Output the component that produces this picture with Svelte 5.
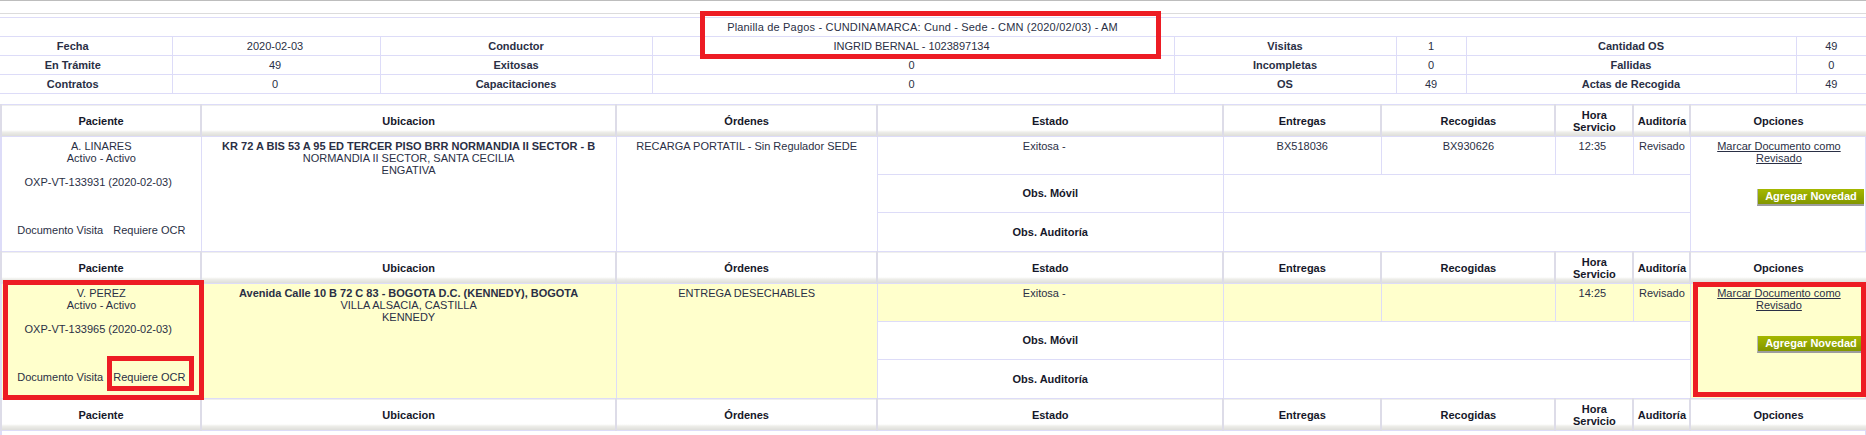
<script lang="ts">
  type Visit = {
    name: string;
    code: string;
    address: string;
    area: string;
    zone: string;
    order: string;
    delivery: string;
    pickup: string;
    time: string;
    highlight: boolean;
  };

  const summary = [
    ['Fecha', '2020-02-03', 'Conductor', 'INGRID BERNAL - 1023897134', 'Visitas', '1', 'Cantidad OS', '49'],
    ['En Trámite', '49', 'Exitosas', '0', 'Incompletas', '0', 'Fallidas', '0'],
    ['Contratos', '0', 'Capacitaciones', '0', 'OS', '49', 'Actas de Recogida', '49']
  ];

  const visits: Visit[] = [
    {
      name: 'A. LINARES',
      code: 'OXP-VT-133931 (2020-02-03)',
      address: 'KR 72 A BIS 53 A 95 ED TERCER PISO BRR NORMANDIA II SECTOR - B',
      area: 'NORMANDIA II SECTOR, SANTA CECILIA',
      zone: 'ENGATIVA',
      order: 'RECARGA PORTATIL - Sin Regulador SEDE',
      delivery: 'BX518036',
      pickup: 'BX930626',
      time: '12:35',
      highlight: false
    },
    {
      name: 'V. PEREZ',
      code: 'OXP-VT-133965 (2020-02-03)',
      address: 'Avenida Calle 10 B 72 C 83 - BOGOTA D.C. (KENNEDY), BOGOTA',
      area: 'VILLA ALSACIA, CASTILLA',
      zone: 'KENNEDY',
      order: 'ENTREGA DESECHABLES',
      delivery: '',
      pickup: '',
      time: '14:25',
      highlight: true
    }
  ];

  const headers = ['Paciente', 'Ubicacion', 'Órdenes', 'Estado', 'Entregas', 'Recogidas', 'Hora Servicio', 'Auditoría', 'Opciones'];
</script>

{#snippet headerRow()}
  <tr class="head">
    {#each headers as h}
      <th>{h}</th>
    {/each}
  </tr>
{/snippet}

<div class="page">
  <div class="rule-top"></div>
  <div class="rule-mid"></div>

  <table class="summary">
    <colgroup>
      <col class="s1" /><col class="s2" /><col class="s3" /><col class="s4" />
      <col class="s5" /><col class="s6" /><col class="s7" /><col class="s8" />
    </colgroup>
    <tbody>
      <tr>
        <td class="title" colspan="8">Planilla de Pagos - CUNDINAMARCA: Cund - Sede - CMN (2020/02/03) - AM</td>
      </tr>
      {#each summary as row}
        <tr>
          {#each row as cell, i}
            <td class:label={i % 2 === 0}>{cell}</td>
          {/each}
        </tr>
      {/each}
    </tbody>
  </table>

  <table class="visits">
    <colgroup>
      <col class="v1" /><col class="v2" /><col class="v3" /><col class="v4" /><col class="v5" />
      <col class="v6" /><col class="v7" /><col class="v8" /><col class="v9" />
    </colgroup>
    <tbody>
      {#each visits as v}
        {@render headerRow()}
        <tr class="first" class:yellow={v.highlight}>
          <td class="patient" rowspan="3">
            {v.name}<br />Activo - Activo<br /><br />{v.code}&nbsp;&nbsp;<br /><br /><br /><br />
            <span class="docs"><span>Documento Visita</span><span>Requiere OCR</span></span>
          </td>
          <td rowspan="3"><b>{v.address}</b><br />{v.area}<br />{v.zone}</td>
          <td rowspan="3">{v.order}</td>
          <td class="state">Exitosa -</td>
          <td>{v.delivery}</td>
          <td>{v.pickup}</td>
          <td class="time">{v.time}</td>
          <td>Revisado</td>
          <td class="options" rowspan="3">
            <a href="#top">Marcar Documento como Revisado</a>
            <span class="novedad">Agregar Novedad</span>
          </td>
        </tr>
        <tr class="obs">
          <th>Obs. Móvil</th>
          <td colspan="4"></td>
        </tr>
        <tr class="obs last">
          <th>Obs. Auditoría</th>
          <td colspan="4"></td>
        </tr>
      {/each}
      {@render headerRow()}
      <tr class="first"><td colspan="9"></td></tr>
    </tbody>
  </table>

  <div class="mark box-title"></div>
  <div class="mark box-patient"></div>
  <div class="mark box-ocr"></div>
  <div class="mark box-options"></div>
</div>

<style>
  :global(body) {
    margin: 0;
    background: #fff;
  }

  .page {
    position: relative;
    height: 435px;
    overflow: hidden;
    font-family: 'Liberation Sans', Arial, sans-serif;
    font-size: 11px;
    line-height: 12px;
    color: #2a2f45;
  }

  .rule-top {
    height: 1px;
    background: #bdbdbd;
  }

  .rule-mid {
    height: 1px;
    margin-top: 12px;
    background: #dcdcdc;
  }

  table {
    border-collapse: collapse;
    table-layout: fixed;
    width: 1866px;
  }

  /* the first column runs off the left edge of the page */
  .summary {
    width: 1892px;
    margin: 3px 0 0 -26px;
  }

  .summary td {
    height: 18px;
    padding: 0;
    border-top: 1px solid #dddcf8;
    border-bottom: 1px solid #dddcf8;
    border-left: 1px solid #dddcf8;
    text-align: center;
  }

  .summary td:first-child {
    border-left: 0;
  }

  .summary td:nth-child(2) {
    padding-right: 2px;
  }

  .summary td:nth-child(4) {
    padding-right: 3px;
  }

  .summary td.title {
    padding-left: 5px;
    letter-spacing: 0.18px;
  }

  .summary .label {
    font-weight: bold;
  }

  .s1 { width: 198px; }
  .s2 { width: 208px; }
  .s3 { width: 272px; }
  .s4 { width: 522px; }
  .s5 { width: 222px; }
  .s6 { width: 70px; }
  .s7 { width: 330px; }
  .s8 { width: 70px; }

  .visits {
    margin-top: 10px;
    border-left: 2px solid #dddcf8;
  }

  .v1 { width: 200px; }
  .v2 { width: 415px; }
  .v3 { width: 261px; }
  .v4 { width: 346px; }
  .v5 { width: 158px; }
  .v6 { width: 174px; }
  .v7 { width: 78px; }
  .v8 { width: 57px; }
  .v9 { width: 175px; }

  .visits td {
    padding: 3px 2px 0;
    border: 1px solid #dddcf8;
    text-align: center;
    vertical-align: top;
  }

  .head th {
    height: 31px;
    padding: 0 2px;
    border-top: 1px solid #dddcf8;
    border-left: 2px solid #dddce8;
    border-bottom: 1px solid #dddcf8;
    background: linear-gradient(#fff 0, #fff 25px, #f0f0ec 26px, #dcdcd8 31px);
    font-weight: bold;
    color: #16182a;
  }

  .head th:nth-child(7) {
    padding: 0 10px;
  }

  .first td {
    height: 34px;
  }

  .yellow td {
    background: #ffffcc;
  }

  .visits .state {
    padding-right: 14px;
  }

  .visits .time {
    padding-right: 6px;
  }

  .obs th {
    height: 35px;
    padding: 0 0 2px;
    border: 1px solid #dddcf8;
    font-weight: bold;
    color: #16182a;
  }

  .obs.last th {
    height: 38px;
    padding: 0;
  }

  .patient {
    white-space: nowrap;
  }

  .docs {
    display: flex;
    justify-content: center;
    gap: 10px;
  }

  .visits .options {
    padding-left: 4px;
  }

  .options a {
    color: #2a2f45;
  }

  .novedad {
    display: block;
    width: 106px;
    height: 15px;
    margin: 25px -1px 0 auto;
    border-left: 1px solid #b9b9b9;
    border-bottom: 2px solid #9c9c9c;
    background: linear-gradient(#a5b800, #829600);
    color: #fff;
    font-weight: bold;
    line-height: 15px;
    white-space: nowrap;
  }

  .mark {
    position: absolute;
    box-sizing: border-box;
    border: 5px solid #ed1c24;
  }

  .box-title {
    left: 700px;
    top: 11px;
    width: 461px;
    height: 48px;
  }

  .box-patient {
    left: 3px;
    top: 280px;
    width: 201px;
    height: 120px;
  }

  .box-ocr {
    left: 107px;
    top: 356px;
    width: 87px;
    height: 35px;
  }

  .box-options {
    left: 1693px;
    top: 282px;
    width: 173px;
    height: 115px;
  }
</style>
